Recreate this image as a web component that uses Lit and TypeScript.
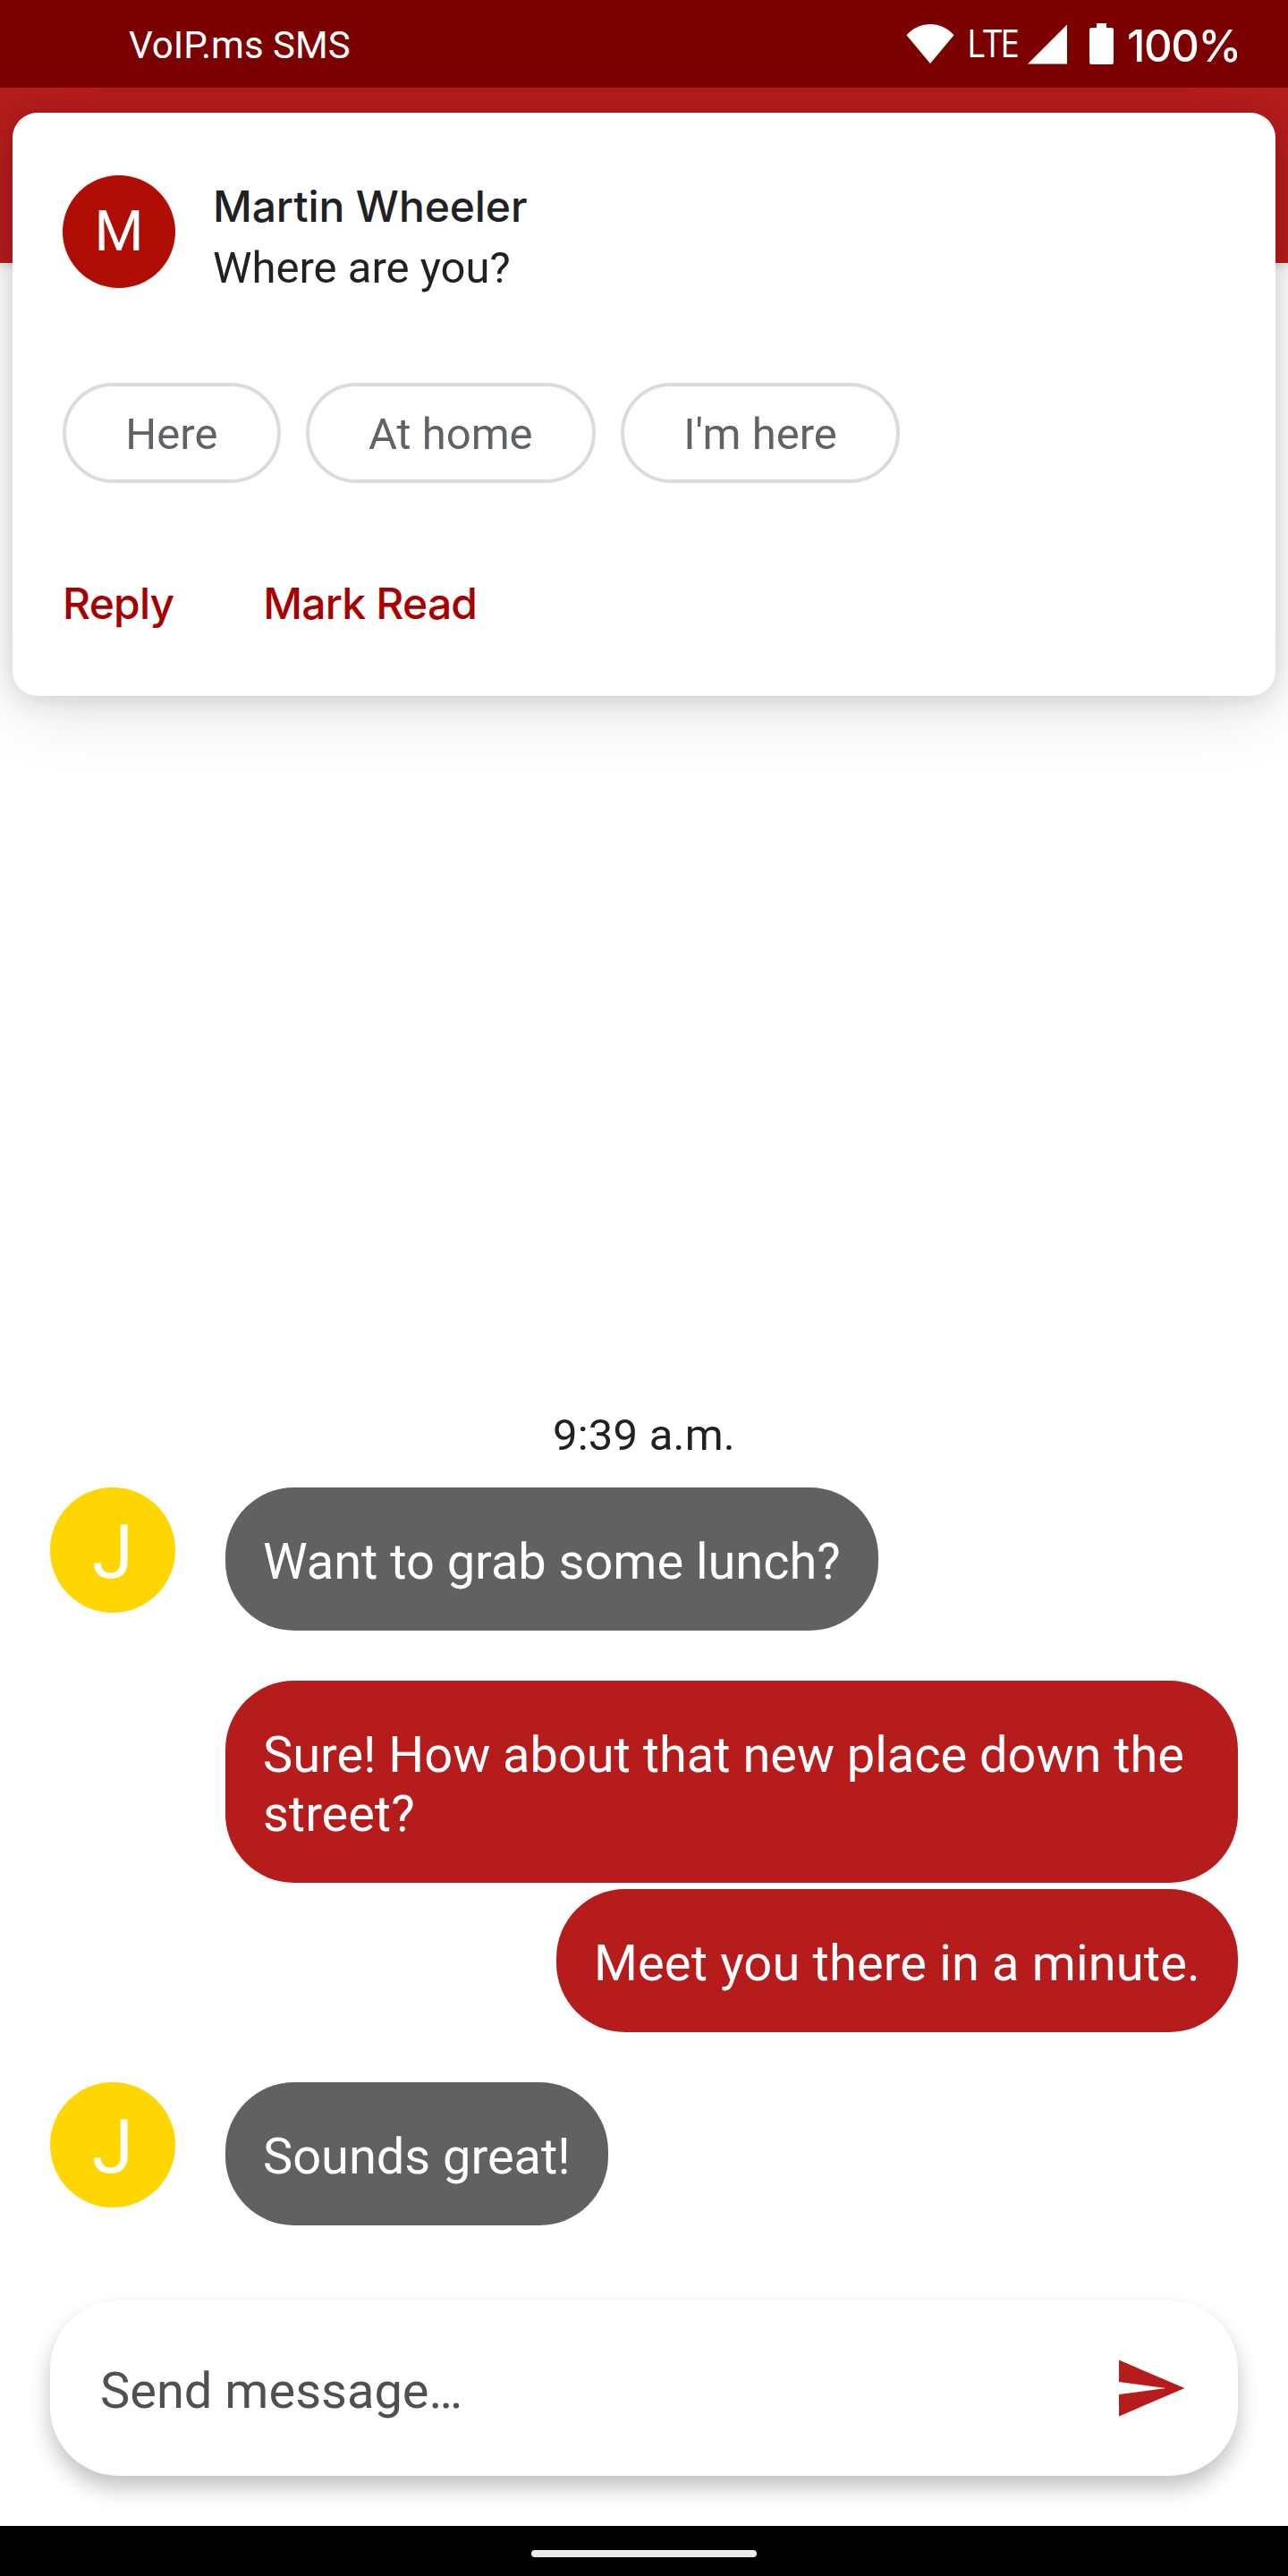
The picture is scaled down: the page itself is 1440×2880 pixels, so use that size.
import { LitElement, html, css, svg } from "lit";
import { customElement, property } from "lit/decorators.js";

@customElement("status-bar")
class StatusBar extends LitElement {
  static styles = css`
    :host { display: block; }
    .bar { height: 98px; box-sizing: border-box; padding: 0 56px 0 144px; display: flex; align-items: center; justify-content: space-between; background: #7d0000; color: #fff; }
    .title { font: 400 42px/49px Roboto, sans-serif; padding-top: 2px; white-space: nowrap; }
    .icons { display: flex; align-items: center; height: 98px; }
    .wifi { width: 54px; height: 46px; margin-right: 14px; }
    .lte { font: 400 43px/50px "Open Sans", sans-serif; width: 61px; letter-spacing: -2.4px; white-space: nowrap; margin-right: 7px; padding-bottom: 2px; transform: scaleX(.9); transform-origin: left; }
    .signal { width: 44px; height: 45px; margin-right: 25px; }
    .battery { width: 27px; height: 46px; margin-right: 15px; }
    .percent { font: 500 49px/58px Inter, sans-serif; width: 124px; letter-spacing: -1.4px; white-space: nowrap; padding-top: 6px; }
  `;
  render() {
    return html`
      <div class="bar">
        <span class="title">VoIP.ms SMS</span>
        <div class="icons">
          <svg class="wifi" viewBox="0 0 54 46"><path fill="#fff" d="M27 45 0.5 13.3C7.500 5.500 17 1 27 1s19.500 4.500 26.500 12.300z"/></svg>
          <span class="lte">LTE</span>
          <svg class="signal" viewBox="0 0 44 45"><path fill="#fff" d="M0 44.500 44 .5v44z"/></svg>
          <svg class="battery" viewBox="0 0 27 46"><path fill="#fff" d="M8 0h11v5h5.500A2.500 2.500 0 0 1 27 7.500v36a2.500 2.500 0 0 1-2.500 2.500h-22A2.500 2.500 0 0 1 0 43.500v-36A2.500 2.500 0 0 1 2.500 5H8z"/></svg>
          <span class="percent">100%</span>
        </div>
      </div>`;
  }
}

@customElement("message-notification")
class MessageNotification extends LitElement {
  static styles = css`
    :host { display: block; font-family: Roboto, sans-serif; }
    .card { box-sizing: border-box; height: 652px; padding: 70px 56px 0; border-radius: 28px; background: #fff; box-shadow: 0 14px 80px rgba(0,0,0,.12), 0 4px 28px rgba(0,0,0,.12); }
    .head { display: flex; gap: 42px; height: 126px; }
    .avatar { width: 126px; height: 126px; border-radius: 50%; background: #b00d05; color: #fff; display: flex; align-items: center; justify-content: center; font-size: 63px; line-height: 74px; }
    .name { font: 500 48px/58px Inter, sans-serif; color: #202124; padding-top: 6px; letter-spacing: -.1px; white-space: nowrap; }
    .text { font-size: 49px; line-height: 58px; color: #202124; padding-top: 11px; }
    .chips { display: flex; gap: 28px; margin-top: 106px; }
    .chip { box-sizing: border-box; height: 112px; padding: 1px 66.3px 0; border: 4px solid #dadce0; border-radius: 56px; color: #5f6368; font-size: 49px; line-height: 106px; white-space: nowrap; }
    .actions { display: flex; gap: 100px; margin-top: 106px; font: 500 48px/58px Inter, sans-serif; letter-spacing: -.8px; color: #a80000; white-space: nowrap; }
  `;
  render() {
    return html`
      <div class="card">
        <div class="head">
          <div class="avatar">M</div>
          <div>
            <div class="name">Martin Wheeler</div>
            <div class="text">Where are you?</div>
          </div>
        </div>
        <div class="chips">
          ${["Here", "At home", "I'm here"].map((t) => html`<div class="chip">${t}</div>`)}
        </div>
        <div class="actions"><span>Reply</span><span>Mark Read</span></div>
      </div>`;
  }
}

@customElement("chat-message")
class ChatMessage extends LitElement {
  @property() text = "";
  @property() initial = "";
  static styles = css`
    :host { display: block; font-family: Roboto, sans-serif; }
    .row { display: flex; align-items: flex-start; padding: 0 56px; }
    .row.out { padding-left: 252px; justify-content: flex-end; }
    .avatar { flex: none; width: 140px; height: 140px; margin-right: 56px; border-radius: 50%; background: #ffd600; color: #fff; text-align: center; font-size: 84px; line-height: 146px; }
    .bubble { box-sizing: border-box; padding: 50px 42px 44px; border-radius: 77px; background: #616161; color: #fff; font-size: 56px; line-height: 66px; }
    .out .bubble { background: #b71c1c; }
  `;
  render() {
    return this.initial
      ? html`<div class="row"><div class="avatar">${this.initial}</div><div class="bubble">${this.text}</div></div>`
      : html`<div class="row out"><div class="bubble">${this.text}</div></div>`;
  }
}

const sendIcon = svg`<path fill="#b71c1c" d="M2.010 21 23 12 2.010 3 2 10l15 2-15 2z"/>`;

@customElement("app-root")
class AppRoot extends LitElement {
  static styles = css`
    :host { display: block; font-family: Roboto, sans-serif; }
    .screen { position: relative; width: 1440px; height: 2880px; overflow: hidden; display: flex; flex-direction: column; background: #fff; }
    .appbar { flex: none; height: 196px; background: #b71c1c; box-shadow: 0 3px 10px rgba(0,0,0,.16); }
    .overlay { position: absolute; left: 14px; right: 14px; top: 126px; }
    .chat { flex: 1; display: flex; flex-direction: column; justify-content: flex-end; letter-spacing: -.04px; }
    .time { text-align: center; font-size: 49px; line-height: 58px; color: #212121; margin-bottom: 29px; letter-spacing: .2px; }
    .spaced { margin-top: 56px; }
    .tight { margin-top: 7px; letter-spacing: .14px; }
    .composer { flex: none; box-sizing: border-box; height: 196px; margin: 84px 56px 56px; padding: 0 56px; border-radius: 77px; background: #fff; box-shadow: 0 14px 24px rgba(0,0,0,.24); display: flex; align-items: center; justify-content: space-between; }
    .hint { font-size: 56px; line-height: 66px; color: #505050; padding-top: 5px; }
    .send { width: 84px; height: 84px; }
    .nav { flex: none; height: 56px; background: #000; display: flex; align-items: center; justify-content: center; }
    .pill { width: 252px; height: 8px; margin-top: 6px; border-radius: 4px; background: #ebebeb; }
  `;
  render() {
    return html`
      <div class="screen">
        <status-bar></status-bar>
        <div class="appbar"></div>
        <div class="chat">
          <div class="time">9:39 a.m.</div>
          <chat-message initial="J" text="Want to grab some lunch?"></chat-message>
          <chat-message class="spaced" text="Sure! How about that new place down the street?"></chat-message>
          <chat-message class="tight" text="Meet you there in a minute."></chat-message>
          <chat-message class="spaced" initial="J" text="Sounds great!"></chat-message>
        </div>
        <div class="composer">
          <span class="hint">Send message…</span>
          <svg class="send" viewBox="0 0 24 24">${sendIcon}</svg>
        </div>
        <div class="nav"><div class="pill"></div></div>
        <div class="overlay"><message-notification></message-notification></div>
      </div>`;
  }
}
